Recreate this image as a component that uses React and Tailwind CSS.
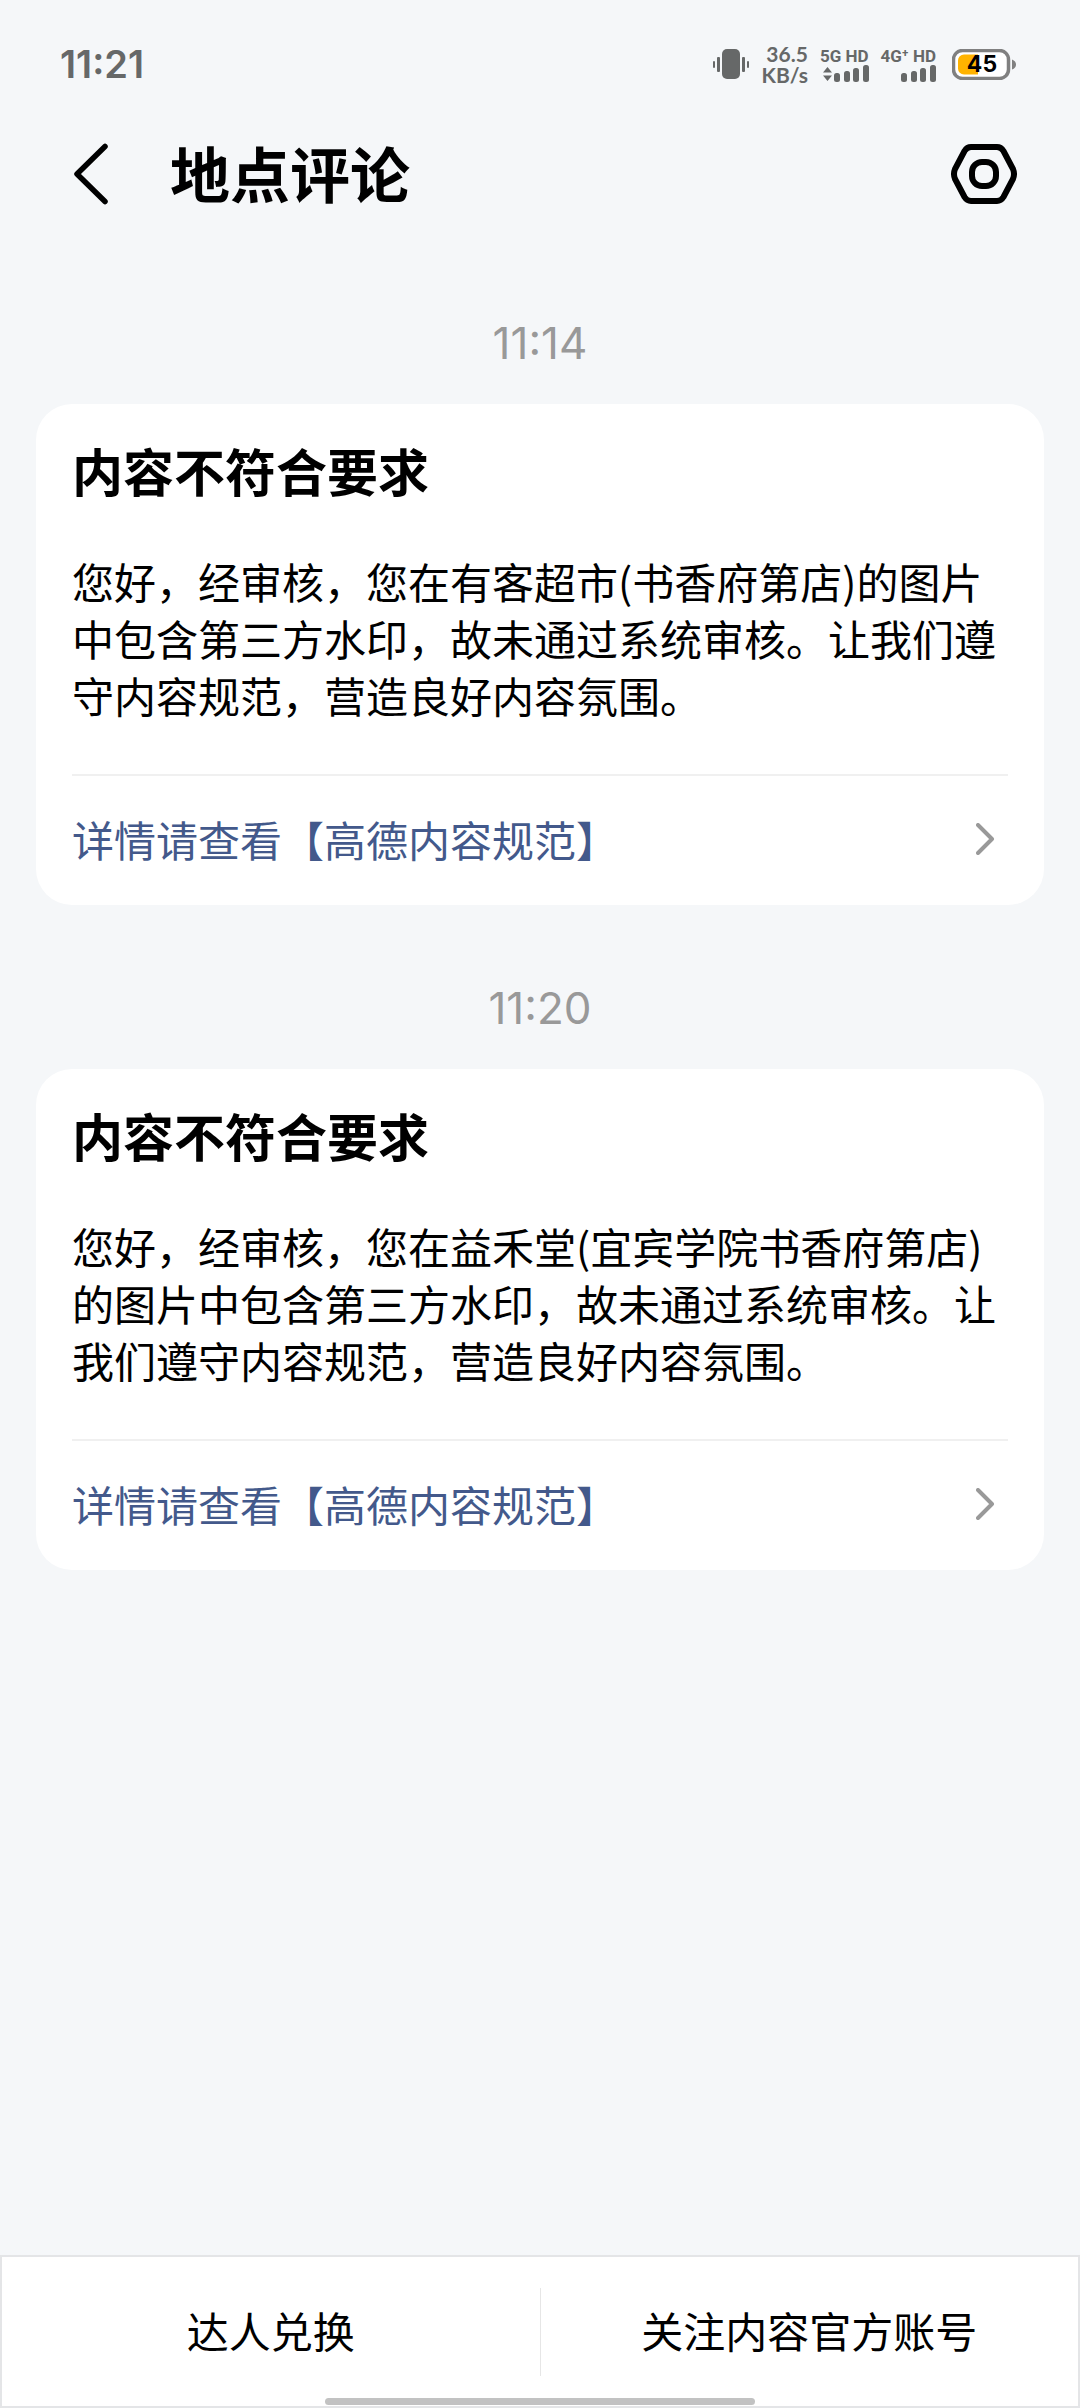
const messages = [
    {
        id: 1,
        time: "11:14",
        title: "内容不符合要求",
        body: "您好，经审核，您在有客超市(书香府第店)的图片中包含第三方水印，故未通过系统审核。让我们遵守内容规范，营造良好内容氛围。",
    },
    {
        id: 2,
        time: "11:20",
        title: "内容不符合要求",
        body: "您好，经审核，您在益禾堂(宜宾学院书香府第店)的图片中包含第三方水印，故未通过系统审核。让我们遵守内容规范，营造良好内容氛围。",
    },
];

const VibrateIcon = () => (
    <svg className="w-9 h-8" viewBox="0 0 36 32" fill="#666868">
        <rect x="9" y="1" width="18" height="30" rx="5" />
        <rect x="0" y="13" width="2" height="7" rx="1" />
        <rect x="4" y="9" width="3" height="15" rx="1" />
        <rect x="29" y="9" width="3" height="15" rx="1" />
        <rect x="34" y="13" width="2" height="7" rx="1" />
    </svg>
);

const Signal = ({ label, arrows }) => (
    <div className="flex flex-col items-end">
        <span className="font-['Roboto',sans-serif] text-[17px] leading-[18px] font-bold whitespace-nowrap">{label}</span>
        <svg className="w-[46px] h-[17px]" viewBox="0 0 46 17" fill="#666868">
            {arrows && <path d="M0 7.5 4.5 2 9 7.5ZM0 10.5 4.5 16 9 10.5Z" />}
            <rect x="11" y="8" width="6" height="9" rx="2.5" />
            <rect x="21" y="6" width="6" height="11" rx="2.5" />
            <rect x="30" y="3" width="6" height="14" rx="2.5" />
            <rect x="40" y="0" width="6" height="17" rx="2.5" />
        </svg>
    </div>
);

const Battery = () => (
    <div className="relative ml-1 w-16 h-[31px]">
        <svg className="w-16 h-[31px]" viewBox="0 0 64 31">
            <rect x="1.5" y="1.5" width="55" height="28" rx="9" fill="#fff" stroke="#808080" strokeWidth="3.5" />
            <path d="M12 5.5H26V25.5H12A6 6 0 0 1 6 19.5V11.5A6 6 0 0 1 12 5.5Z" fill="#ffb300" />
            <path d="M60 10.5Q64 12 64 15.5T60 20.5Z" fill="#808080" />
        </svg>
        <span className="absolute inset-0 pr-1 text-center font-['Inter',sans-serif] text-[23px] leading-[31px] font-bold text-black">45</span>
    </div>
);

const StatusBar = () => (
    <div className="flex h-32 items-center justify-between pl-15 pr-16 text-[#666868]">
        <span className="font-['Inter',sans-serif] text-[38px] leading-10 font-semibold">11:21</span>
        <div className="flex items-center gap-3">
            <VibrateIcon />
            <p className="text-right font-['Lato',sans-serif] text-[21px] leading-[21px] font-bold">
                36.5
                <br />
                KB/s
            </p>
            <Signal label="5G HD" arrows />
            <Signal label="4G⁺ HD" />
            <Battery />
        </div>
    </div>
);

const Header = () => (
    <header className="flex h-[92px] items-center pl-[72px] pr-[63px]">
        <button type="button" aria-label="返回">
            <svg className="w-10 h-[62px]" viewBox="0 0 40 62" fill="none" stroke="#000" strokeWidth="5.5" strokeLinecap="round" strokeLinejoin="round">
                <path d="M33 3.5 5 31 33 58.5" />
            </svg>
        </button>
        <h1 className="ml-[58px] flex-1 pb-1 text-[60px] leading-[80px] font-bold">地点评论</h1>
        <button type="button" aria-label="设置">
            <svg className="w-[66px] h-15" viewBox="0 0 66 60" fill="none" stroke="#000" strokeWidth="6">
                <path d="M20 3H46Q50 3 52.5 7L62 25Q64 30 62 35L52.5 53Q50 57 46 57H20Q16 57 13.5 53L4 35Q2 30 4 25L13.5 7Q16 3 20 3Z" />
                <rect x="21" y="18" width="24" height="24" rx="10" />
            </svg>
        </button>
    </header>
);

const MessageCard = ({ time, title, body }) => (
    <section className="pt-[73px]">
        <p className="mb-[31px] text-center font-['Inter',sans-serif] text-[44px] leading-[60px] text-[#999]">{time}</p>
        <article className="rounded-[36px] bg-white px-9 pt-9">
            <h2 className="text-[51px] leading-[60px] font-bold">{title}</h2>
            <p className="mt-[52px] text-[42px] leading-[57px]">{body}</p>
            <a href="#rules" className="mt-[51px] flex h-[131px] items-center justify-between border-t-2 border-[#f0f0f0] pr-3 pb-1 text-[42px] text-[#43598b]">
                详情请查看【高德内容规范】
                <svg className="w-5 h-8" viewBox="0 0 20 32" fill="none" stroke="#999" strokeWidth="4" strokeLinecap="round" strokeLinejoin="round">
                    <path d="M2 2 16 16 2 30" />
                </svg>
            </a>
        </article>
    </section>
);

const BottomBar = () => (
    <nav className="relative flex h-[153px] items-center border-2 border-[#e4e5e7] bg-white text-[42px]">
        <button type="button" className="h-full flex-1 pb-1">达人兑换</button>
        <div className="h-[88px] w-px bg-[#e6e6e6]" />
        <button type="button" className="h-full flex-1 pb-1">关注内容官方账号</button>
        {/* Indicador de inicio */}
        <div className="absolute bottom-px left-[30%] right-[30%] h-[7px] rounded-full bg-[#c2c2c2]" />
    </nav>
);

export default function App() {
    return (
        <div className="flex min-h-screen flex-col bg-[#f5f7f9] font-['Noto_Sans_CJK_SC',sans-serif] text-black">
            <StatusBar />
            <Header />
            <main className="flex-1 px-9 pt-5">
                {messages.map((m) => (
                    <MessageCard key={m.id} time={m.time} title={m.title} body={m.body} />
                ))}
            </main>
            <BottomBar />
        </div>
    );
}
